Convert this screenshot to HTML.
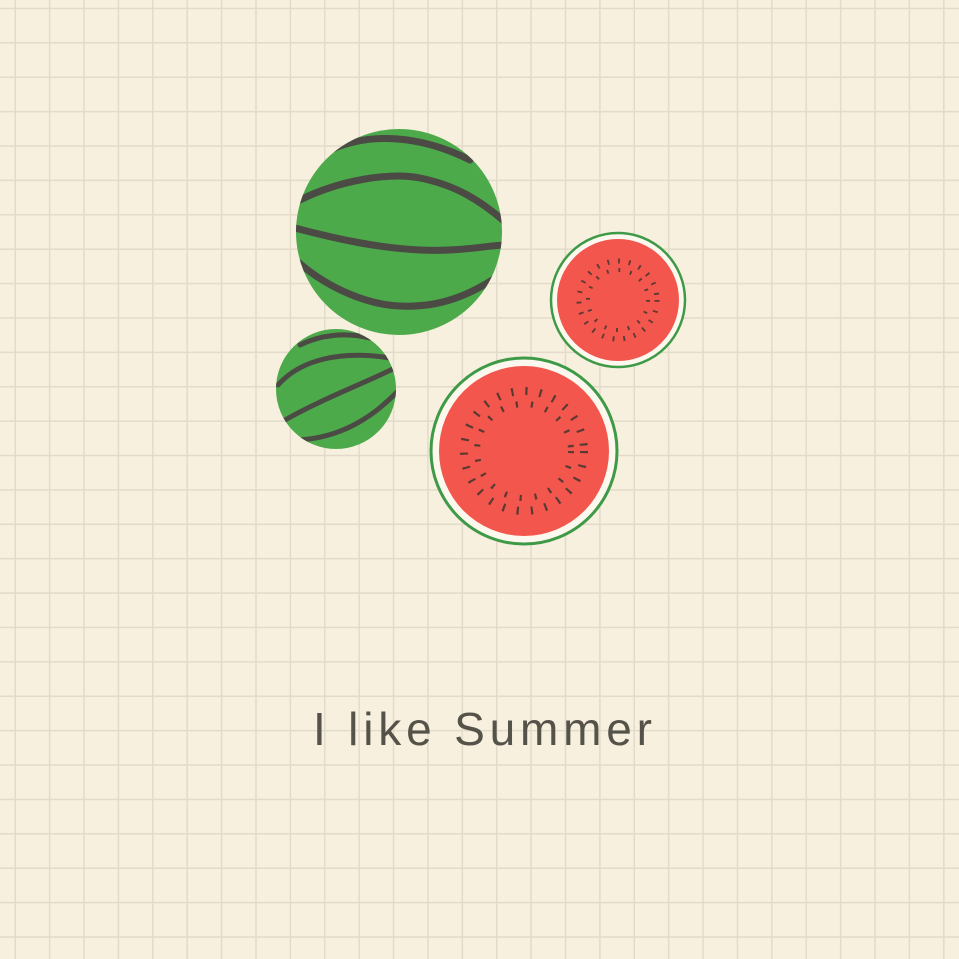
<!DOCTYPE html>
<html><head><style>
html,body{margin:0;padding:0}
body{width:959px;height:959px;overflow:hidden;background-color:#f7f0de;
background-image:linear-gradient(to right,#e2dbc9 1.5px,transparent 1.5px),linear-gradient(to bottom,#e2dbc9 1.5px,transparent 1.5px);
background-size:34.4px 34.4px;background-position:14.5px 7.7px;}
svg{position:absolute;left:0;top:0}
</style></head><body>
<svg width="959" height="959" viewBox="0 0 959 959">
<defs>
<clipPath id="c1"><circle cx="399" cy="232" r="103"/></clipPath>
<clipPath id="c2"><circle cx="336" cy="389" r="60"/></clipPath>
</defs>
<circle cx="399" cy="232" r="103" fill="#4caa4a"/>
<g clip-path="url(#c1)" stroke="#4b4a44" stroke-width="7" fill="none" stroke-linecap="round">
<path d="M300 200 C340 180 390 172 420 178 C455 185 480 200 505 222"/>
<path d="M295 228 C340 240 380 248 420 250 C460 252 490 245 505 245"/>
<path d="M298 262 C330 290 370 305 400 306 C440 308 470 295 500 275"/>
<path d="M330 150 C370 132 420 135 470 160"/>
</g>
<circle cx="336" cy="389" r="60" fill="#4caa4a"/>
<g clip-path="url(#c2)" stroke="#4b4a44" stroke-width="5" fill="none" stroke-linecap="round">
<path d="M278 385 C300 360 340 350 390 358"/>
<path d="M285 420 C320 400 360 385 395 368"/>
<path d="M292 440 C330 440 365 425 397 392"/>
<path d="M300 345 C320 335 345 332 370 338"/>
</g>
<circle cx="618" cy="300" r="67" fill="#fdf8ee" stroke="#3f9a48" stroke-width="2.5"/>
<circle cx="618" cy="300" r="61" fill="#f2564d"/>
<circle cx="618" cy="300" r="39" fill="none" stroke="#5a3a33" stroke-width="5" stroke-dasharray="1.8 9"/>
<circle cx="618" cy="300" r="30" fill="none" stroke="#5a3a33" stroke-width="4" stroke-dasharray="1.8 10"/>
<circle cx="524" cy="451" r="93" fill="#fdf8ee" stroke="#3f9a48" stroke-width="3"/>
<circle cx="524" cy="451" r="85" fill="#f2564d"/>
<circle cx="524" cy="451" r="60" fill="none" stroke="#5a3a33" stroke-width="8" stroke-dasharray="2.2 12"/>
<circle cx="524" cy="451" r="47" fill="none" stroke="#5a3a33" stroke-width="6" stroke-dasharray="2.2 13"/>
<text x="313" y="745" textLength="339" lengthAdjust="spacing" font-family="Liberation Sans, sans-serif" font-size="46" fill="#55524a">I like Summer</text>
</svg>
</body></html>
